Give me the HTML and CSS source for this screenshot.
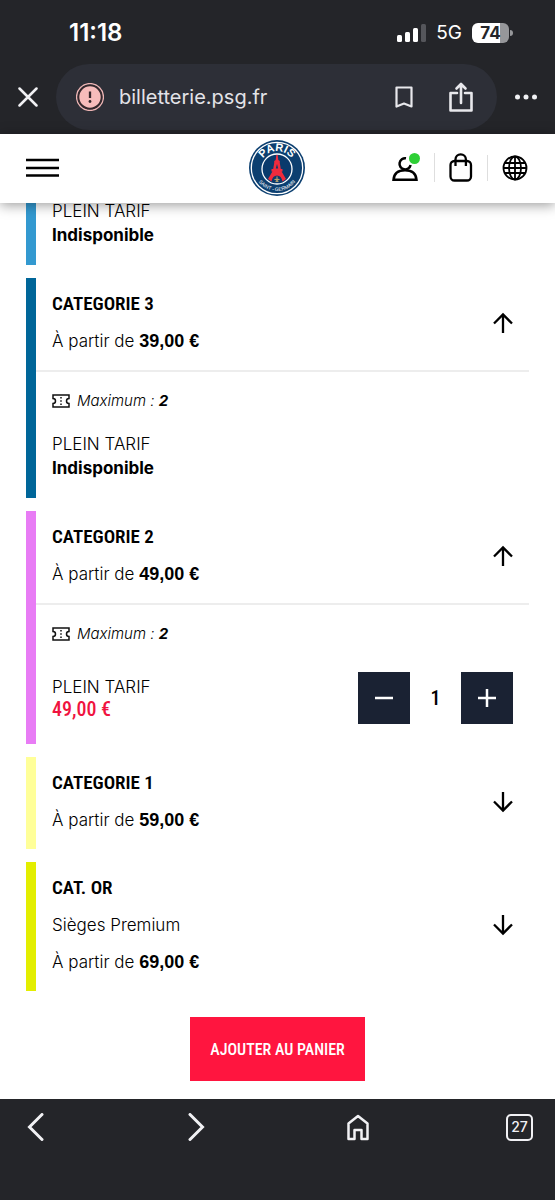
FILE: index.html
```
<!DOCTYPE html>
<html lang="fr">

<head>
  <meta charset="UTF-8">
  <meta name="viewport" content="width=device-width, initial-scale=1.0">
  <title>Billetterie PSG</title>
  <link rel="stylesheet" href="styles.css">
</head>

<body>
  <div class="browser-top">
    <div class="status-bar">
      <span class="time">11:18</span>
      <div class="status-icons">
        <svg width="29" height="18" viewBox="0 0 29 18" fill="#fff">
          <rect x="0" y="11" width="5" height="7" rx="1.5"/>
          <rect x="8" y="8" width="5" height="10" rx="1.5"/>
          <rect x="16" y="4" width="5" height="14" rx="1.5"/>
          <rect x="24" y="0" width="5" height="18" rx="1.5" fill="#55565b"/>
        </svg>
        <span class="network">5G</span>
        <span class="battery">74</span>
      </div>
    </div>

    <div class="toolbar">
      <button class="icon-btn" aria-label="Fermer">
        <svg width="20" height="20" viewBox="0 0 20 20" fill="none" stroke="#f1f1f4" stroke-width="2.5" stroke-linecap="round"><path d="M1.5 1.5l17 17M18.5 1.5l-17 17"/></svg>
      </button>
      <div class="address">
        <svg width="28" height="28" viewBox="0 0 28 28">
          <circle cx="14" cy="14" r="13.4" fill="none" stroke="#efb5b4" stroke-width="1.4"/>
          <circle cx="14" cy="14" r="11.5" fill="#f7bcbb" stroke="#35272b" stroke-width="1.6"/>
          <path d="M14 8.500v6.500" stroke="#35272b" stroke-width="2.300"/>
          <circle cx="14" cy="18.500" r="1.400" fill="#35272b"/>
        </svg>
        <span class="url">billetterie.psg.fr</span>
        <button class="icon-btn" aria-label="Favoris">
          <svg width="18" height="22" viewBox="0 0 18 22" fill="none" stroke="#e8e8ec" stroke-width="2.200" stroke-linejoin="round"><path d="M1.500 1.500h15v19L9 17.500l-7.500 3z"/></svg>
        </button>
        <button class="icon-btn share" aria-label="Partager">
          <svg width="24" height="30" viewBox="0 0 24 30" fill="none" stroke="#e8e8ec" stroke-width="2.600" stroke-linejoin="round"><path d="M8 11H1.500v17.500h21V11H16M12 21V3M7.500 6.500L12 2l4.500 4.500" stroke-linecap="round"/></svg>
        </button>
      </div>
      <button class="icon-btn" aria-label="Menu">
        <svg width="22" height="6" viewBox="0 0 22 6" fill="#f1f1f4"><circle cx="2.500" cy="3" r="2.500"/><circle cx="11" cy="3" r="2.500"/><circle cx="19.500" cy="3" r="2.500"/></svg>
      </button>
    </div>
  </div>

  <header class="site-header">
    <button class="icon-btn menu" aria-label="Ouvrir le menu">
      <svg width="33" height="20" viewBox="0 0 33 20" stroke="#000" stroke-width="2.500"><path d="M0 2h33M0 10h33M0 17.500h33"/></svg>
    </button>

    <a class="logo" href="#" aria-label="Paris Saint-Germain">
      <svg width="56" height="56" viewBox="0 0 56 56">
        <defs>
          <path id="arcTop" d="M11 28a17 17 0 0 1 34 0"/>
          <path id="arcBottom" d="M5 28a23 23 0 0 0 46 0"/>
        </defs>
        <circle cx="28" cy="28" r="28" fill="#0c3f70"/>
        <circle cx="28" cy="28" r="25.700" fill="none" stroke="#fff" stroke-width="1.300"/>
        <circle cx="28" cy="29" r="15" fill="#0a3a6c" stroke="#fff" stroke-width="1.300"/>
        <path d="M27.300 15h1.400l.6 5 1.500 1v2l1 6h1.700v2.500h-.9l4.400 7.500-3.500 2.500c-.7-4-2.500-6-5.500-6s-4.800 2-5.500 6L19 39l4.400-7.500h-.9V29h1.700l1-6v-2l1.500-1z" fill="#ee2b3d"/>
        <path d="M28 24l-1.200 4.500h2.400z" fill="#0a3a6c"/>
        <path d="M28 36.500v5M25.500 39.500q2.500-1 2.500 1 0-2 2.500-1M26.500 41.300h3" fill="none" stroke="#c9ae6c" stroke-width="1"/>
        <text class="logo-paris"><textPath href="#arcTop" startOffset="50%">PARIS</textPath></text>
        <text class="logo-sg"><textPath href="#arcBottom" startOffset="50%">SAINT - GERMAIN</textPath></text>
      </svg>
    </a>

    <nav class="header-nav">
      <a href="#" aria-label="Mon compte">
        <svg width="28" height="29" viewBox="0 0 28 29" fill="none" stroke="#000" stroke-width="2.500">
          <path d="M14 5.300a5.600 5.600 0 1 0 4.600 6.700"/>
          <path d="M1.500 26.800C2 20 7 17.200 13 17.200s11 2.800 11.500 9.600z"/>
          <circle cx="22.500" cy="5.500" r="5.500" fill="#2ecf35" stroke="none"/>
        </svg>
      </a>
      <a href="#" aria-label="Panier">
        <svg width="24" height="29" viewBox="0 0 24 29" fill="none" stroke="#000" stroke-width="2.300">
          <rect x="1.500" y="8" width="20.500" height="19.500" rx="4"/>
          <path d="M6.500 13V6.500a5.200 5.200 0 0 1 10.400 0V13"/>
        </svg>
      </a>
      <a href="#" aria-label="Langue">
        <svg width="26" height="26" viewBox="0 0 26 26" fill="none" stroke="#000" stroke-width="1.800">
          <circle cx="13" cy="13" r="11.500"/>
          <ellipse cx="13" cy="13" rx="6" ry="11.500"/>
          <path d="M13 1v24M1 13h24M3 8h20M3 18h20"/>
        </svg>
      </a>
    </nav>
  </header>

  <main class="content">
    <ul class="categories">
      <li class="category cat-blue">
        <div class="tarif">
          <div class="tarif-name">PLEIN TARIF<strong>Indisponible</strong></div>
        </div>
      </li>

      <li class="category cat-navy">
        <div class="category-head">
          <div class="category-info">
            <h2>CATEGORIE 3</h2>
            <p>À partir de <strong>39,00 €</strong></p>
          </div>
          <button class="icon-btn" aria-label="Replier">
            <svg class="arrow" viewBox="0 0 22 22"><path d="M11 21V2.500M2 11.500l9-9 9 9"/></svg>
          </button>
        </div>
        <div class="category-body">
          <p class="maximum">
            <svg class="ticket" viewBox="0 0 18 14"><path d="M1 1h16v3.500a2.500 2.500 0 0 0 0 5V13H1V9.500a2.500 2.500 0 0 0 0-5z"/><path d="M9 3v9" stroke-dasharray="1.500 1.800"/></svg>
            <em>Maximum : <strong>2</strong></em>
          </p>
          <div class="tarif">
            <div class="tarif-name">PLEIN TARIF<strong>Indisponible</strong></div>
          </div>
        </div>
      </li>

      <li class="category cat-pink">
        <div class="category-head">
          <div class="category-info">
            <h2>CATEGORIE 2</h2>
            <p>À partir de <strong>49,00 €</strong></p>
          </div>
          <button class="icon-btn" aria-label="Replier">
            <svg class="arrow" viewBox="0 0 22 22"><path d="M11 21V2.500M2 11.500l9-9 9 9"/></svg>
          </button>
        </div>
        <div class="category-body">
          <p class="maximum">
            <svg class="ticket" viewBox="0 0 18 14"><path d="M1 1h16v3.500a2.500 2.500 0 0 0 0 5V13H1V9.500a2.500 2.500 0 0 0 0-5z"/><path d="M9 3v9" stroke-dasharray="1.500 1.800"/></svg>
            <em>Maximum : <strong>2</strong></em>
          </p>
          <div class="tarif available">
            <label class="tarif-name" for="qty">PLEIN TARIF<span class="price">49,00 €</span></label>
            <div class="stepper">
              <button aria-label="Retirer une place">
                <svg width="20" height="20" viewBox="0 0 20 20"><path d="M1 10h18"/></svg>
              </button>
              <input id="qty" type="text" inputmode="numeric" value="1">
              <button aria-label="Ajouter une place">
                <svg width="20" height="20" viewBox="0 0 20 20"><path d="M1 10h18M10 1v18"/></svg>
              </button>
            </div>
          </div>
        </div>
      </li>

      <li class="category cat-yellow">
        <div class="category-head">
          <div class="category-info">
            <h2>CATEGORIE 1</h2>
            <p>À partir de <strong>59,00 €</strong></p>
          </div>
          <button class="icon-btn" aria-label="Déplier">
            <svg class="arrow" viewBox="0 0 22 22"><path d="M11 1v18.500M2 10.500l9 9 9-9"/></svg>
          </button>
        </div>
      </li>

      <li class="category cat-gold">
        <div class="category-head">
          <div class="category-info">
            <h2>CAT. OR</h2>
            <p>Sièges Premium</p>
            <p>À partir de <strong>69,00 €</strong></p>
          </div>
          <button class="icon-btn" aria-label="Déplier">
            <svg class="arrow" viewBox="0 0 22 22"><path d="M11 1v18.500M2 10.500l9 9 9-9"/></svg>
          </button>
        </div>
      </li>
    </ul>

    <button class="add-to-cart">AJOUTER AU PANIER</button>
  </main>

  <nav class="browser-bottom">
    <button class="icon-btn" aria-label="Précédent">
      <svg width="28" height="28" viewBox="0 0 28 28"><path d="M20 1.500L7.500 14 20 26.500"/></svg>
    </button>
    <button class="icon-btn" aria-label="Suivant">
      <svg width="28" height="28" viewBox="0 0 28 28"><path d="M7 1.500L19.500 14 7 26.500"/></svg>
    </button>
    <button class="icon-btn" aria-label="Accueil">
      <svg class="home" width="28" height="28" viewBox="0 0 28 28" stroke-linejoin="round"><path d="M3.500 10.500L13 3l9.500 7.500V26h-6v-9h-7v9h-6z"/></svg>
    </button>
    <button class="tabs" aria-label="Onglets">27</button>
  </nav>
</body>

</html>
```
FILE: styles.css
```
* {
  box-sizing: border-box;
}

body {
  margin: 0;
  min-height: 100vh;
  display: flex;
  flex-direction: column;
  background-color: #fff;
  color: #000;
  font-family: Inter, 'Liberation Sans', sans-serif;
  font-size: 17px;
  font-weight: 300;
  line-height: 24px;
}

h2,
p,
ul {
  margin: 0;
  padding: 0;
}

svg {
  display: block;
  flex: none;
}

strong {
  font-weight: 700;
}

.icon-btn {
  padding: 0;
  border: none;
  background: none;
  cursor: pointer;
}

/* Browser bars */
.browser-top {
  padding-bottom: 4px;
  background-color: #242529;
  color: #fff;
}

.status-bar {
  display: flex;
  justify-content: space-between;
  align-items: center;
  height: 64px;
  padding: 2px 46px 0 69px;
}

.time {
  font-size: 24px;
  font-weight: 600;
}

.status-icons {
  display: flex;
  align-items: center;
  gap: 10px;
}

.network {
  font-size: 19px;
  font-weight: 400;
}

.battery {
  position: relative;
  width: 37px;
  height: 20px;
  border-radius: 6px;
  background: linear-gradient(to right, #fff 75%, #96979a 75%);
  color: #242529;
  font-size: 17px;
  font-weight: 700;
  line-height: 20px;
  text-align: center;
}

.battery::after {
  content: '';
  position: absolute;
  top: 7px;
  right: -4px;
  width: 3px;
  height: 6px;
  border-radius: 0 3px 3px 0;
  background-color: #96979a;
}

.toolbar {
  display: flex;
  align-items: center;
  padding: 0 18px;
  gap: 18px;
}

.address {
  flex: 1;
  display: flex;
  align-items: center;
  height: 66px;
  padding: 0 24px 0 20px;
  border-radius: 33px;
  background-color: #2d2f37;
}

.url {
  flex: 1;
  padding-left: 15px;
  font-size: 20px;
  font-weight: 400;
  color: #e3e3e8;
}

.share {
  margin-left: 36px;
}

.browser-bottom {
  display: flex;
  justify-content: space-between;
  align-items: center;
  padding: 14px 22px 59px;
  background-color: #242529;
}

.browser-bottom svg {
  fill: none;
  stroke: #f1f1f4;
  stroke-width: 3;
  stroke-linecap: round;
}

.browser-bottom .home {
  stroke-width: 2.5;
}

.tabs {
  width: 27px;
  height: 27px;
  padding: 0;
  border: 2px solid #f1f1f4;
  border-radius: 5px;
  background: none;
  color: #f1f1f4;
  font: 500 14px/22px Inter, sans-serif;
}

/* Site header */
.site-header {
  position: relative;
  z-index: 1;
  display: grid;
  grid-template-columns: 1fr auto 1fr;
  align-items: center;
  height: 69px;
  padding: 0 27px 2px 26px;
  background-color: #fff;
  box-shadow: 0 2px 12px rgba(0, 0, 0, 0.4);
}

.menu {
  justify-self: start;
}

.logo-paris,
.logo-sg {
  fill: #fff;
  font-family: 'Liberation Sans', sans-serif;
  text-anchor: middle;
}

.logo-paris {
  font-size: 11px;
  font-weight: 700;
}

.logo-sg {
  font-size: 5px;
}

.header-nav {
  display: flex;
  justify-content: flex-end;
  align-items: center;
}

.header-nav a + a {
  margin-left: 14px;
  padding-left: 14px;
  border-left: 1px solid #dedede;
}

/* Categories */
.content {
  flex: 1;
  padding: 0 26px 17px;
}

.categories {
  display: flex;
  flex-direction: column;
  gap: 13px;
  margin-top: -4px;
  list-style: none;
}

.category {
  border-left: 10px solid;
}

.cat-blue {
  border-color: #3399d0;
}

.cat-navy {
  border-color: #006699;
}

.cat-pink {
  border-color: #e87cf5;
}

.cat-yellow {
  border-color: #ffff99;
}

.cat-gold {
  border-color: #e3ee00;
}

.category-head {
  display: flex;
  justify-content: space-between;
  align-items: center;
  padding: 14px 15px 17px 16px;
}

.category-info {
  display: flex;
  flex-direction: column;
  gap: 13px;
}

.category-info strong {
  font-family: 'Liberation Sans', sans-serif;
  font-size: 18px;
  line-height: 20px;
}

h2,
.price,
.stepper input,
.add-to-cart {
  font-family: 'Roboto Condensed', 'Liberation Sans Narrow', sans-serif;
  font-size: 20px;
  font-weight: 500;
}

h2 {
  font-size: 19px;
  font-weight: 600;
  line-height: 24px;
}

.arrow {
  width: 22px;
  height: 22px;
  fill: none;
  stroke: #000;
  stroke-width: 2.3;
}

.category-body {
  padding-top: 19px;
  border-top: 2px solid #ededed;
}

.maximum {
  display: flex;
  align-items: center;
  gap: 7px;
  margin-bottom: 21px;
  padding: 0 16px;
  font-size: 15px;
  line-height: 20px;
}

.ticket {
  width: 18px;
  height: 14px;
  fill: none;
  stroke: #111;
  stroke-width: 1.5;
}

.tarif {
  display: flex;
  justify-content: space-between;
  align-items: center;
  padding: 0 16px 18px;
}

.tarif.available {
  padding: 7px 16px 20px;
  line-height: 22px;
}

.tarif-name strong,
.price {
  display: block;
}

.price {
  color: #f0133f;
}

.stepper {
  display: flex;
  align-items: center;
}

.stepper button {
  display: flex;
  justify-content: center;
  align-items: center;
  width: 52px;
  height: 52px;
  padding: 0;
  border: none;
  background-color: #1a2233;
  cursor: pointer;
}

.stepper svg {
  fill: none;
  stroke: #fff;
  stroke-width: 2.5;
}

.stepper input {
  width: 51px;
  padding: 0;
  border: none;
  background: none;
  text-align: center;
}

.add-to-cart {
  display: block;
  height: 64px;
  margin: 26px auto 0;
  padding: 0 20px;
  border: none;
  background-color: #ff153f;
  color: #fff;
  font-size: 16px;
  cursor: pointer;
}
```
